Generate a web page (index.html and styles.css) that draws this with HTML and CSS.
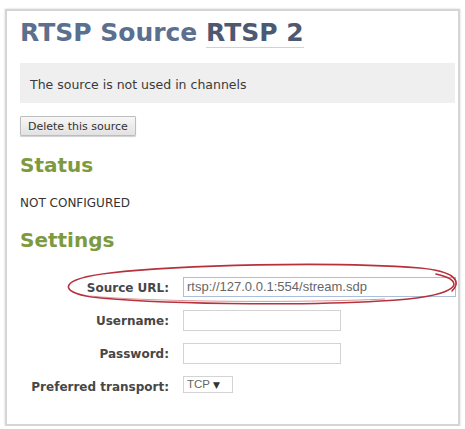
FILE: index.html
```html
<!DOCTYPE html>
<html>
<head>
<meta charset="utf-8">
<link rel="stylesheet" href="styles.css">
</head>
<body>
<div class="frame">
  <h1 class="title">RTSP Source <span class="name">RTSP 2</span></h1>
  <div class="notice">The source is not used in channels</div>
  <button class="btn" type="button">Delete this source</button>
  <h2 class="section">Status</h2>
  <div class="status">NOT CONFIGURED</div>
  <h2 class="section settings">Settings</h2>
  <div class="form">
    <label class="lbl">Source URL:</label>
    <div class="field"><div class="input url">rtsp://127.0.0.1:554/stream.sdp</div></div>
    <label class="lbl">Username:</label>
    <div class="field"><div class="input short"></div></div>
    <label class="lbl">Password:</label>
    <div class="field"><div class="input short"></div></div>
    <label class="lbl">Preferred transport:</label>
    <div class="field"><div class="select">TCP <span class="arrow">▼</span></div></div>
  </div>
  <svg class="mark" width="465" height="429" viewBox="0 0 465 429">
    <path d="M 436 274 C 468 281, 462 297, 380 301 C 300 306, 150 304, 92 297 C 58 292, 58 279, 110 273 C 180 265, 330 261, 420 268 C 452 271, 463 280, 452 291" fill="none" stroke="#b5323d" stroke-width="1.6" stroke-linecap="round"/>
    <path d="M 90 296 C 150 302, 300 303, 385 299" fill="none" stroke="#c96a72" stroke-width="1" opacity="0.7"/>
  </svg>
</div>
</body>
</html>
```

FILE: styles.css
```css
html, body {
  margin: 0;
  padding: 0;
  background: #ffffff;
}
body {
  font-family: "DejaVu Sans", Verdana, sans-serif;
  color: #333333;
}
.frame {
  position: relative;
  box-sizing: border-box;
  width: 455px;
  height: 417px;
  margin: 9px 5px 0 5px;
  border: 2px solid #d5d5d5;
  box-shadow: 0 0 2px #cfcfcf;
  padding: 0 3px 0 13px;
}
.title {
  margin: 7px 0 0 0;
  font-size: 25px;
  line-height: 30px;
  font-weight: bold;
  color: #5b6f8e;
}
.title .name {
  color: #4d5971;
  border-bottom: 1px solid #d2d2d2;
}
.notice {
  margin-top: 15px;
  height: 40px;
  box-sizing: border-box;
  padding: 3px 10px 0 10px;
  line-height: 37px;
  font-size: 12.5px;
  background: #efefef;
  color: #3a3a3a;
}
.btn {
  display: block;
  margin: 13px 0 0 0;
  height: 20px;
  padding: 0 7px;
  font-family: "DejaVu Sans", Verdana, sans-serif;
  font-size: 11px;
  color: #333;
  background: linear-gradient(#f7f7f7, #e2e2e2);
  border: 1px solid #bdbdbd;
  border-radius: 1px;
  box-shadow: 0 1px 1px #d0d0d0;
}
.section {
  margin: 17px 0 0 0;
  font-size: 20px;
  line-height: 24px;
  font-weight: bold;
  color: #7d9a3e;
}
.status {
  margin-top: 18px;
  font-size: 12px;
  line-height: 16px;
  color: #333;
}
.settings {
  margin-top: 17px;
}
.form {
  margin-top: 25px;
  display: grid;
  grid-template-columns: 149px auto;
  column-gap: 14px;
  row-gap: 12px;
  grid-auto-rows: 21px;
}
.lbl {
  justify-self: end;
  align-self: center;
  font-size: 12px;
  line-height: 16px;
  font-weight: bold;
  color: #474747;
}
.field {
  display: flex;
  align-items: flex-start;
}
.input {
  box-sizing: border-box;
  height: 21px;
  border: 1px solid #d3d3d3;
  background: #fff;
  font-family: "Liberation Sans", Arial, sans-serif;
  font-size: 13px;
  line-height: 19px;
  padding-left: 3px;
  color: #666;
}
.input.url {
  width: 273px;
  height: 20px;
  line-height: 18px;
  border-color: #aabfdc;
}
.input.short {
  width: 158px;
}
.select {
  box-sizing: border-box;
  width: 50px;
  height: 17px;
  border: 1px solid #d3d3d3;
  font-family: "Liberation Sans", Arial, sans-serif;
  font-size: 11.5px;
  line-height: 15px;
  padding-left: 3px;
  color: #666;
  white-space: nowrap;
}
.select .arrow {
  font-family: "DejaVu Sans", sans-serif;
  font-size: 9px;
  color: #333;
}
.mark {
  position: absolute;
  left: -7px;
  top: -11px;
  pointer-events: none;
  overflow: visible;
}
```
